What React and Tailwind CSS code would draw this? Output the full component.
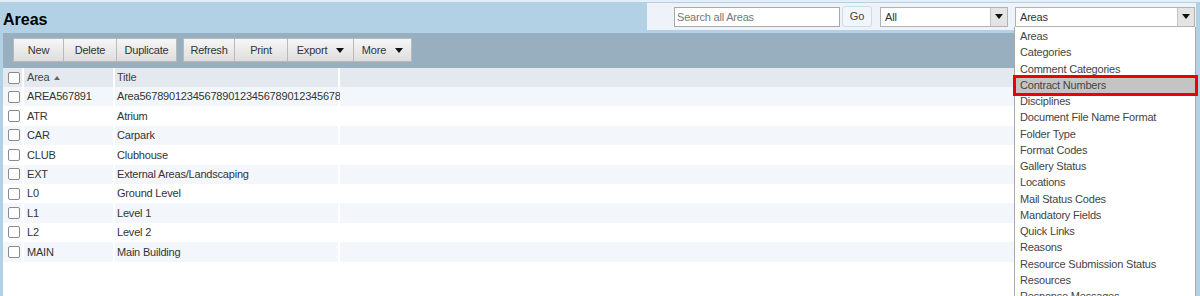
import React from 'react';

const rows = [
  ['AREA567891', 'Area5678901234567890123456789012345678'],
  ['ATR', 'Atrium'],
  ['CAR', 'Carpark'],
  ['CLUB', 'Clubhouse'],
  ['EXT', 'External Areas/Landscaping'],
  ['L0', 'Ground Level'],
  ['L1', 'Level 1'],
  ['L2', 'Level 2'],
  ['MAIN', 'Main Building'],
];

const options = [
  'Areas',
  'Categories',
  'Comment Categories',
  'Contract Numbers',
  'Disciplines',
  'Document File Name Format',
  'Folder Type',
  'Format Codes',
  'Gallery Status',
  'Locations',
  'Mail Status Codes',
  'Mandatory Fields',
  'Quick Links',
  'Reasons',
  'Resource Submission Status',
  'Resources',
  'Response Messages',
];

const Caret = () => (
  <span className="inline-block w-0 h-0 border-l-[4px] border-r-[4px] border-t-[5px] border-l-transparent border-r-transparent border-t-[#111]" />
);

const Checkbox = () => (
  <span className="block w-[12px] h-[12px] rounded-[2px] border border-[#8a8a8a] bg-white" />
);

const ToolButton = ({ label, width, menu }) => (
  <button
    className={`h-[24px] ${width} flex items-center justify-center gap-[9px] border border-[#b9b9b9] -ml-px first:ml-0 bg-gradient-to-b from-[#f6f6f6] to-[#dedede] text-[#333]`}
  >
    <span>{label}</span>
    {menu && <Caret />}
  </button>
);

const Select = ({ value, width }) => (
  <div className={`h-[20px] ${width} flex bg-white border border-[#b2b2b2]`}>
    <span className="flex-1 pl-[4px] leading-[18px] text-[#333]">{value}</span>
    <span className="w-[17px] flex items-center justify-center bg-[#e4e4e4] border-l border-[#c4c4c4]">
      <Caret />
    </span>
  </div>
);

export default function App() {
  return (
    <div className="relative w-[1200px] h-[296px] overflow-hidden bg-[#b3d1e4] font-['Liberation_Sans',Arial,sans-serif] text-[11px] tracking-[-0.2px] border-t-[2px] border-t-[#e3eef6]">
      <div className="ml-[3px] mr-[4px] mt-[1px] h-[293px] flex flex-col">
        {/* title bar */}
        <div className="h-[30px] flex items-center justify-between">
          <h1 className="text-[16px] font-bold tracking-normal text-black leading-none pt-[3px]">Areas</h1>
          <div className="h-[27px] w-[549px] self-start bg-[#eef3f9] flex items-center pl-[27px]">
            <input
              placeholder="Search all Areas"
              className="h-[20px] w-[166px] border border-[#a8a8a8] bg-white px-[2px] text-[11px] placeholder-[#777] outline-none"
            />
            <button className="ml-[2px] h-[21px] w-[30px] rounded-[3px] border border-[#cddcea] bg-[#f2f6fb] text-[#444]">
              Go
            </button>
            <div className="ml-[8px]">
              <Select value="All" width="w-[128px]" />
            </div>
            <div className="ml-[7px]">
              <Select value="Areas" width="w-[180px]" />
            </div>
          </div>
        </div>

        {/* toolbar */}
        <div className="h-[35px] bg-[#98afbf] flex items-start pt-[5px] pl-[10px] gap-[6px]">
          <div className="flex">
            <ToolButton label="New" width="w-[51px]" />
            <ToolButton label="Delete" width="w-[54px]" />
            <ToolButton label="Duplicate" width="w-[61px]" />
          </div>
          <div className="flex">
            <ToolButton label="Refresh" width="w-[52px]" />
            <ToolButton label="Print" width="w-[54px]" />
            <ToolButton label="Export" width="w-[67px]" menu />
            <ToolButton label="More" width="w-[59px]" menu />
          </div>
        </div>

        {/* grid */}
        <div className="flex-1 bg-white text-[#333]">
          <div className="grid grid-cols-[19px_89px_223px_1fr] gap-x-[2px] h-[19px]">
            <div className="bg-[#e3e9ee] flex items-center pl-[5px]">
              <Checkbox />
            </div>
            <div className="bg-[#e3e9ee] flex items-center pl-[3px] gap-[5px] text-[#444]">
              Area
              <span className="inline-block w-0 h-0 border-l-[3px] border-r-[3px] border-b-[4px] border-l-transparent border-r-transparent border-b-[#666]" />
            </div>
            <div className="bg-[#e3e9ee] flex items-center pl-[2px] text-[#444]">Title</div>
            <div className="bg-[#e3e9ee]" />
          </div>
          {rows.map(([code, title], i) => {
            const bg = i % 2 === 0 ? 'bg-[#f3f7fb]' : 'bg-white';
            return (
              <div key={code} className="grid grid-cols-[19px_89px_223px_1fr] gap-x-[2px] h-[19.4px]">
                <div className={`${bg} flex items-center pl-[5px]`}>
                  <Checkbox />
                </div>
                <div className={`${bg} flex items-center pl-[3px]`}>{code}</div>
                <div className={`${bg} flex items-center pl-[2px] whitespace-nowrap`}>{title}</div>
                <div className={bg} />
              </div>
            );
          })}
        </div>
      </div>

      {/* open dropdown list */}
      <ul className="absolute left-[1014px] top-[25px] w-[182px] bottom-0 bg-white border-x border-[#a9a9a9] text-[#444] pt-[1px]">
        {options.map((o) => (
          <li
            key={o}
            className={`relative h-[16.25px] leading-[16.25px] pl-[5px] whitespace-nowrap ${o === 'Contract Numbers' ? 'bg-[#c4c4c4]' : ''}`}
          >
            {o}
            {o === 'Contract Numbers' && (
              <span className="absolute left-[-2px] right-[-3px] top-[-2px] bottom-[-3px] border-[3px] border-[#ee0000]" />
            )}
          </li>
        ))}
      </ul>
    </div>
  );
}
